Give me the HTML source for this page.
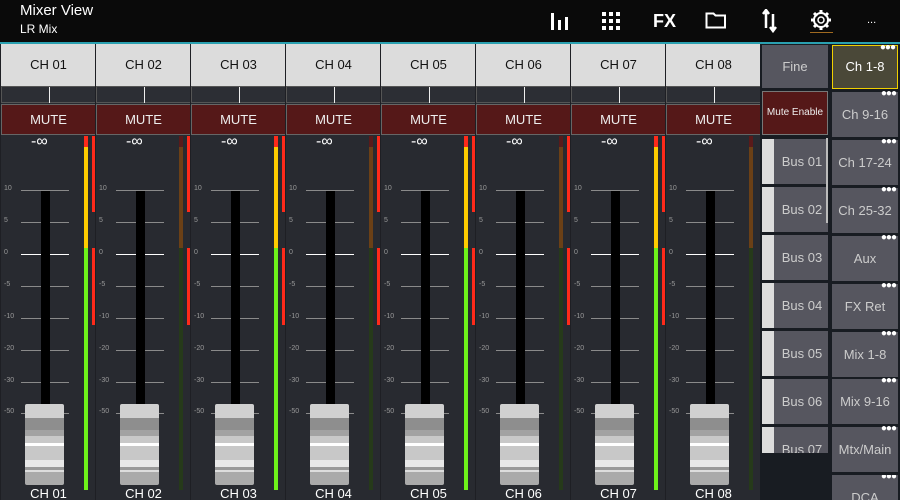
<!DOCTYPE html>
<html style="width:900px;height:500px;overflow:hidden"><head><meta charset="utf-8"><style>
*{margin:0;padding:0;box-sizing:border-box}
body{width:900px;height:500px;background:#282a30;font-family:"Liberation Sans",sans-serif;position:relative;overflow:hidden}
.top{position:absolute;left:0;top:0;width:900px;height:42px;background:#0a0a0a}
.tl{position:absolute;left:0;top:42px;width:900px;height:2px;background:#2aa0b0}
.t1{position:absolute;left:20px;top:2px;color:#fff;font-size:15px}
.t2{position:absolute;left:20px;top:22px;color:#fff;font-size:12px}
.ic{position:absolute;color:#fff}
.s{position:absolute;top:44px;width:95px;height:456px;border-left:1px solid #1e1f24}
.h{position:absolute;left:0;top:0;width:95px;height:42px;background:#dcdcdc;color:#111;font-size:13px;text-align:center;line-height:42px}
.p{position:absolute;left:0;top:42px;width:95px;height:17px;background:#2c2e34;border:1px solid #555}
.p i{position:absolute;left:47px;top:0;width:1px;height:16px;background:#eee}
.m{position:absolute;left:0;top:60px;width:95px;height:31px;background:#551818;border:1px solid #666;color:#eee;font-size:13px;text-align:center;line-height:29px}
.inf{position:absolute;left:30px;top:89px;color:#fff;font-size:16px}
.tk{position:absolute;left:20px;width:48px;height:1px;background:#8a8a8a}
.tk.z{background:#fff}
.lb{position:absolute;left:3px;font-size:7px;color:#999}
.tr{position:absolute;left:40px;top:147px;width:9px;height:215px;background:#000}
.cap{position:absolute;left:24px;top:360px;width:39px;height:81px;border-radius:2px;background:linear-gradient(#d0d0d0 0,#d0d0d0 14px,#8e8e8e 14px,#8e8e8e 26px,#a2a2a2 26px,#a2a2a2 32px,#c8c8c8 32px,#c8c8c8 39px,#fff 39px,#fff 42px,#c8c8c8 42px,#c8c8c8 56px,#e8e8e8 56px,#e8e8e8 63px,#999 63px,#999 66px,#ddd 66px,#ddd 68px,#aaa 68px)}
.nm{position:absolute;left:0;width:95px;top:442px;text-align:center;color:#fff;font-size:13px}
.mt{position:absolute;left:83px;top:92px;width:4px;height:354px}
.mt.a{background:linear-gradient(#ff2a1a 0,#ff2a1a 11px,#ffcc00 11px,#ffcc00 112px,#6ef21a 112px)}
.mt.d{background:linear-gradient(#5a1a1a 0,#5a1a1a 11px,#6b4016 11px,#6b4016 112px,#263a1a 112px)}
.rd{position:absolute;left:91px;width:4px;background:#ff2a1a}
.bx{position:absolute;background:#56565f;color:#ccc;font-size:13px;text-align:center}
.dots{position:absolute;right:2px;top:-3px;color:#fff;font-size:10px;letter-spacing:-1px;line-height:10px}
</style></head><body>
<div class="top"></div><div class="tl"></div>
<div class="t1">Mixer View</div><div class="t2">LR Mix</div>
<svg class="ic" style="left:550px;top:11px" width="20" height="20"><rect x="1" y="2" width="3" height="17" fill="#fff"/><rect x="8" y="9" width="3" height="10" fill="#fff"/><rect x="15" y="6" width="3" height="13" fill="#fff"/></svg>
<svg class="ic" style="left:602px;top:12px" width="20" height="20"><g fill="#fff"><rect x="0" y="0" width="4" height="4"/><rect x="7" y="0" width="4" height="4"/><rect x="14" y="0" width="4" height="4"/><rect x="0" y="7" width="4" height="4"/><rect x="7" y="7" width="4" height="4"/><rect x="14" y="7" width="4" height="4"/><rect x="0" y="14" width="4" height="4"/><rect x="7" y="14" width="4" height="4"/><rect x="14" y="14" width="4" height="4"/></g></svg>
<div class="ic" style="left:653px;top:11px;font-size:18px;font-weight:bold">FX</div>
<svg class="ic" style="left:705px;top:11px" width="22" height="18"><path d="M1.5 2.5h7l2 2h9.5v12h-18.5z" fill="none" stroke="#fff" stroke-width="2"/></svg>
<svg class="ic" style="left:762px;top:9px" width="16" height="24"><path d="M4 2v17M1 5l3-4 3 4M11 5v17M8 18l3 4 3-4" stroke="#fff" stroke-width="2.5" fill="none"/></svg>
<svg class="ic" style="left:810px;top:9px" width="22" height="22"><circle cx="11" cy="11" r="7" fill="none" stroke="#fff" stroke-width="2"/><circle cx="11" cy="11" r="3" fill="none" stroke="#fff" stroke-width="1.5"/><g stroke="#fff" stroke-width="3"><path d="M11 1v4M11 17v4M1 11h4M17 11h4M4 4l3 3M15 15l3 3M4 18l3-3M15 7l3-3"/></g></svg>
<div style="position:absolute;left:810px;top:32px;width:23px;height:1px;background:#a06a20"></div>
<div class="ic" style="left:867px;top:14px;font-size:11px">...</div>

<div class="s" style="left:0"><div class="h">CH 01</div><div class="p"><i></i></div><div class="m">MUTE</div><div class="inf">-∞</div>
<div class="tk" style="top:146px"></div><div class="tk" style="top:178px"></div><div class="tk z" style="top:210px"></div><div class="tk" style="top:242px"></div><div class="tk" style="top:274px"></div><div class="tk" style="top:306px"></div><div class="tk" style="top:338px"></div><div class="tk" style="top:369px"></div>
<div class="lb" style="top:141px">10</div><div class="lb" style="top:173px">5</div><div class="lb" style="top:205px">0</div><div class="lb" style="top:237px">-5</div><div class="lb" style="top:269px">-10</div><div class="lb" style="top:301px">-20</div><div class="lb" style="top:333px">-30</div><div class="lb" style="top:364px">-50</div>
<div class="tr"></div><div class="cap"></div><div class="nm">CH 01</div><div class="mt a"></div><div class="rd" style="top:92px;height:76px"></div><div class="rd" style="top:204px;height:77px"></div></div>

<div class="s" style="left:95px"><div class="h">CH 02</div><div class="p"><i></i></div><div class="m">MUTE</div><div class="inf">-∞</div>
<div class="tk" style="top:146px"></div><div class="tk" style="top:178px"></div><div class="tk z" style="top:210px"></div><div class="tk" style="top:242px"></div><div class="tk" style="top:274px"></div><div class="tk" style="top:306px"></div><div class="tk" style="top:338px"></div><div class="tk" style="top:369px"></div>
<div class="lb" style="top:141px">10</div><div class="lb" style="top:173px">5</div><div class="lb" style="top:205px">0</div><div class="lb" style="top:237px">-5</div><div class="lb" style="top:269px">-10</div><div class="lb" style="top:301px">-20</div><div class="lb" style="top:333px">-30</div><div class="lb" style="top:364px">-50</div>
<div class="tr"></div><div class="cap"></div><div class="nm">CH 02</div><div class="mt d"></div><div class="rd" style="top:92px;height:76px"></div><div class="rd" style="top:204px;height:77px"></div></div>

<div class="s" style="left:190px"><div class="h">CH 03</div><div class="p"><i></i></div><div class="m">MUTE</div><div class="inf">-∞</div>
<div class="tk" style="top:146px"></div><div class="tk" style="top:178px"></div><div class="tk z" style="top:210px"></div><div class="tk" style="top:242px"></div><div class="tk" style="top:274px"></div><div class="tk" style="top:306px"></div><div class="tk" style="top:338px"></div><div class="tk" style="top:369px"></div>
<div class="lb" style="top:141px">10</div><div class="lb" style="top:173px">5</div><div class="lb" style="top:205px">0</div><div class="lb" style="top:237px">-5</div><div class="lb" style="top:269px">-10</div><div class="lb" style="top:301px">-20</div><div class="lb" style="top:333px">-30</div><div class="lb" style="top:364px">-50</div>
<div class="tr"></div><div class="cap"></div><div class="nm">CH 03</div><div class="mt a"></div><div class="rd" style="top:92px;height:76px"></div><div class="rd" style="top:204px;height:77px"></div></div>

<div class="s" style="left:285px"><div class="h">CH 04</div><div class="p"><i></i></div><div class="m">MUTE</div><div class="inf">-∞</div>
<div class="tk" style="top:146px"></div><div class="tk" style="top:178px"></div><div class="tk z" style="top:210px"></div><div class="tk" style="top:242px"></div><div class="tk" style="top:274px"></div><div class="tk" style="top:306px"></div><div class="tk" style="top:338px"></div><div class="tk" style="top:369px"></div>
<div class="lb" style="top:141px">10</div><div class="lb" style="top:173px">5</div><div class="lb" style="top:205px">0</div><div class="lb" style="top:237px">-5</div><div class="lb" style="top:269px">-10</div><div class="lb" style="top:301px">-20</div><div class="lb" style="top:333px">-30</div><div class="lb" style="top:364px">-50</div>
<div class="tr"></div><div class="cap"></div><div class="nm">CH 04</div><div class="mt d"></div><div class="rd" style="top:92px;height:76px"></div><div class="rd" style="top:204px;height:77px"></div></div>

<div class="s" style="left:380px"><div class="h">CH 05</div><div class="p"><i></i></div><div class="m">MUTE</div><div class="inf">-∞</div>
<div class="tk" style="top:146px"></div><div class="tk" style="top:178px"></div><div class="tk z" style="top:210px"></div><div class="tk" style="top:242px"></div><div class="tk" style="top:274px"></div><div class="tk" style="top:306px"></div><div class="tk" style="top:338px"></div><div class="tk" style="top:369px"></div>
<div class="lb" style="top:141px">10</div><div class="lb" style="top:173px">5</div><div class="lb" style="top:205px">0</div><div class="lb" style="top:237px">-5</div><div class="lb" style="top:269px">-10</div><div class="lb" style="top:301px">-20</div><div class="lb" style="top:333px">-30</div><div class="lb" style="top:364px">-50</div>
<div class="tr"></div><div class="cap"></div><div class="nm">CH 05</div><div class="mt a"></div><div class="rd" style="top:92px;height:76px"></div><div class="rd" style="top:204px;height:77px"></div></div>

<div class="s" style="left:475px"><div class="h">CH 06</div><div class="p"><i></i></div><div class="m">MUTE</div><div class="inf">-∞</div>
<div class="tk" style="top:146px"></div><div class="tk" style="top:178px"></div><div class="tk z" style="top:210px"></div><div class="tk" style="top:242px"></div><div class="tk" style="top:274px"></div><div class="tk" style="top:306px"></div><div class="tk" style="top:338px"></div><div class="tk" style="top:369px"></div>
<div class="lb" style="top:141px">10</div><div class="lb" style="top:173px">5</div><div class="lb" style="top:205px">0</div><div class="lb" style="top:237px">-5</div><div class="lb" style="top:269px">-10</div><div class="lb" style="top:301px">-20</div><div class="lb" style="top:333px">-30</div><div class="lb" style="top:364px">-50</div>
<div class="tr"></div><div class="cap"></div><div class="nm">CH 06</div><div class="mt d"></div><div class="rd" style="top:92px;height:76px"></div><div class="rd" style="top:204px;height:77px"></div></div>

<div class="s" style="left:570px"><div class="h">CH 07</div><div class="p"><i></i></div><div class="m">MUTE</div><div class="inf">-∞</div>
<div class="tk" style="top:146px"></div><div class="tk" style="top:178px"></div><div class="tk z" style="top:210px"></div><div class="tk" style="top:242px"></div><div class="tk" style="top:274px"></div><div class="tk" style="top:306px"></div><div class="tk" style="top:338px"></div><div class="tk" style="top:369px"></div>
<div class="lb" style="top:141px">10</div><div class="lb" style="top:173px">5</div><div class="lb" style="top:205px">0</div><div class="lb" style="top:237px">-5</div><div class="lb" style="top:269px">-10</div><div class="lb" style="top:301px">-20</div><div class="lb" style="top:333px">-30</div><div class="lb" style="top:364px">-50</div>
<div class="tr"></div><div class="cap"></div><div class="nm">CH 07</div><div class="mt a"></div><div class="rd" style="top:92px;height:76px"></div><div class="rd" style="top:204px;height:77px"></div></div>

<div class="s" style="left:665px"><div class="h">CH 08</div><div class="p"><i></i></div><div class="m">MUTE</div><div class="inf">-∞</div>
<div class="tk" style="top:146px"></div><div class="tk" style="top:178px"></div><div class="tk z" style="top:210px"></div><div class="tk" style="top:242px"></div><div class="tk" style="top:274px"></div><div class="tk" style="top:306px"></div><div class="tk" style="top:338px"></div><div class="tk" style="top:369px"></div>
<div class="lb" style="top:141px">10</div><div class="lb" style="top:173px">5</div><div class="lb" style="top:205px">0</div><div class="lb" style="top:237px">-5</div><div class="lb" style="top:269px">-10</div><div class="lb" style="top:301px">-20</div><div class="lb" style="top:333px">-30</div><div class="lb" style="top:364px">-50</div>
<div class="tr"></div><div class="cap"></div><div class="nm">CH 08</div><div class="mt d"></div></div>

<div style="position:absolute;left:760px;top:44px;width:140px;height:456px;background:#181c22"></div>
<div class="bx" style="left:762px;top:45px;width:66px;height:43px;line-height:43px">Fine</div>
<div class="bx" style="left:762px;top:91px;width:66px;height:44px;line-height:42px;background:#551818;border:1px solid #777;color:#eee;font-size:10px">Mute Enable</div>
<div style="position:absolute;left:762px;top:137px;width:66px;height:316px;overflow:hidden">
<div class="bx" style="left:0;top:2px;width:66px;height:45px;line-height:45px;padding-left:14px"><span style="position:absolute;left:0;top:0;width:12px;height:45px;background:#dcdcdc"></span>Bus 01</div>
<div class="bx" style="left:0;top:50px;width:66px;height:45px;line-height:45px;padding-left:14px"><span style="position:absolute;left:0;top:0;width:12px;height:45px;background:#dcdcdc"></span>Bus 02</div>
<div class="bx" style="left:0;top:98px;width:66px;height:45px;line-height:45px;padding-left:14px"><span style="position:absolute;left:0;top:0;width:12px;height:45px;background:#dcdcdc"></span>Bus 03</div>
<div class="bx" style="left:0;top:146px;width:66px;height:45px;line-height:45px;padding-left:14px"><span style="position:absolute;left:0;top:0;width:12px;height:45px;background:#dcdcdc"></span>Bus 04</div>
<div class="bx" style="left:0;top:194px;width:66px;height:45px;line-height:45px;padding-left:14px"><span style="position:absolute;left:0;top:0;width:12px;height:45px;background:#dcdcdc"></span>Bus 05</div>
<div class="bx" style="left:0;top:242px;width:66px;height:45px;line-height:45px;padding-left:14px"><span style="position:absolute;left:0;top:0;width:12px;height:45px;background:#dcdcdc"></span>Bus 06</div>
<div class="bx" style="left:0;top:290px;width:66px;height:45px;line-height:45px;padding-left:14px"><span style="position:absolute;left:0;top:0;width:12px;height:45px;background:#dcdcdc"></span>Bus 07</div>
</div>
<div style="position:absolute;left:826px;top:138px;width:2px;height:85px;background:#bbb"></div>
<div class="bx" style="left:832px;top:45px;width:66px;height:44px;line-height:42px;background:#4a4838;border:1px solid #f0d000;color:#fff">Ch 1-8<span class="dots">●●●</span></div>
<div class="bx" style="left:832px;top:92px;width:66px;height:45px;line-height:45px">Ch 9-16<span class="dots">●●●</span></div>
<div class="bx" style="left:832px;top:140px;width:66px;height:45px;line-height:45px">Ch 17-24<span class="dots">●●●</span></div>
<div class="bx" style="left:832px;top:188px;width:66px;height:45px;line-height:45px">Ch 25-32<span class="dots">●●●</span></div>
<div class="bx" style="left:832px;top:236px;width:66px;height:45px;line-height:45px">Aux<span class="dots">●●●</span></div>
<div class="bx" style="left:832px;top:284px;width:66px;height:45px;line-height:45px">FX Ret<span class="dots">●●●</span></div>
<div class="bx" style="left:832px;top:332px;width:66px;height:45px;line-height:45px">Mix 1-8<span class="dots">●●●</span></div>
<div class="bx" style="left:832px;top:379px;width:66px;height:45px;line-height:45px">Mix 9-16<span class="dots">●●●</span></div>
<div class="bx" style="left:832px;top:427px;width:66px;height:45px;line-height:45px">Mtx/Main<span class="dots">●●●</span></div>
<div class="bx" style="left:832px;top:475px;width:66px;height:25px;line-height:45px;overflow:hidden">DCA<span class="dots" style="top:-3px">●●●</span></div>
</body></html>
